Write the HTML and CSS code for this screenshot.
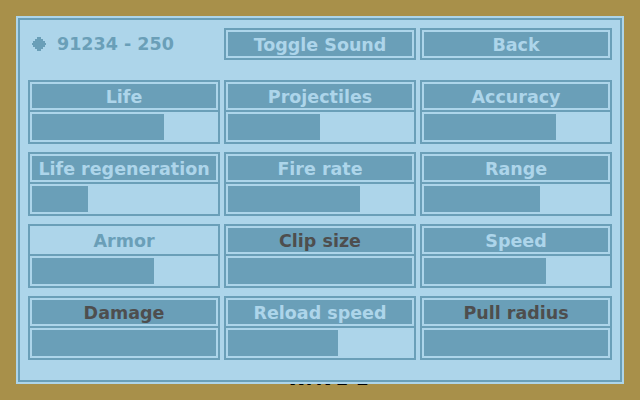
FILE: index.html
```html
<!DOCTYPE html>
<html lang="en">
<head>
<meta charset="utf-8">
<title>Upgrades</title>
<link rel="stylesheet" href="styles.css">
</head>
<body>
<div class="stage">
  <div class="wave">WAVE 2</div>
  <main class="panel">
    <div class="frame">
      <div class="topbar">
        <div class="score">
          <svg class="gem" width="14" height="14" viewBox="0 0 14 14" aria-hidden="true">
            <path d="M5 0H9V2H11V4H13V6H14V8H13V10H11V12H9V14H5V12H3V10H1V8H0V6H1V4H3V2H5Z"/>
          </svg>
          <span>91234 - 250</span>
        </div>
        <button class="btn">Toggle Sound</button>
        <button class="btn">Back</button>
      </div>

      <div class="stats">
        <div class="stat">
          <div class="stat-head">Life</div>
          <div class="stat-bar"><div class="track"><div class="fill" style="width:132px"></div></div></div>
        </div>
        <div class="stat">
          <div class="stat-head">Projectiles</div>
          <div class="stat-bar"><div class="track"><div class="fill" style="width:92px"></div></div></div>
        </div>
        <div class="stat">
          <div class="stat-head">Accuracy</div>
          <div class="stat-bar"><div class="track"><div class="fill" style="width:132px"></div></div></div>
        </div>

        <div class="stat">
          <div class="stat-head">Life regeneration</div>
          <div class="stat-bar"><div class="track"><div class="fill" style="width:56px"></div></div></div>
        </div>
        <div class="stat">
          <div class="stat-head">Fire rate</div>
          <div class="stat-bar"><div class="track"><div class="fill" style="width:132px"></div></div></div>
        </div>
        <div class="stat">
          <div class="stat-head">Range</div>
          <div class="stat-bar"><div class="track"><div class="fill" style="width:116px"></div></div></div>
        </div>

        <div class="stat">
          <div class="stat-head is-locked">Armor</div>
          <div class="stat-bar"><div class="track"><div class="fill" style="width:122px"></div></div></div>
        </div>
        <div class="stat">
          <div class="stat-head is-maxed">Clip size</div>
          <div class="stat-bar"><div class="track"><div class="fill" style="width:184px"></div></div></div>
        </div>
        <div class="stat">
          <div class="stat-head">Speed</div>
          <div class="stat-bar"><div class="track"><div class="fill" style="width:122px"></div></div></div>
        </div>

        <div class="stat">
          <div class="stat-head is-maxed">Damage</div>
          <div class="stat-bar"><div class="track"><div class="fill" style="width:184px"></div></div></div>
        </div>
        <div class="stat">
          <div class="stat-head">Reload speed</div>
          <div class="stat-bar"><div class="track"><div class="fill" style="width:110px"></div></div></div>
        </div>
        <div class="stat">
          <div class="stat-head is-maxed">Pull radius</div>
          <div class="stat-bar"><div class="track"><div class="fill" style="width:184px"></div></div></div>
        </div>
      </div>
    </div>
  </main>
</div>
</body>
</html>
```

FILE: styles.css
```css
:root {
  --sand: #a8904a;
  --ice: #add5ea;
  --steel: #6a9fb8;
  --ink: #4e4e4e;
}

* { box-sizing: border-box; }

html, body {
  margin: 0;
  width: 640px;
  height: 400px;
  overflow: hidden;
  background: var(--sand);
  font-family: "DejaVu Sans", "Liberation Sans", sans-serif;
  font-weight: bold;
}

.stage {
  position: relative;
  width: 640px;
  height: 400px;
  padding: 16px;
}

/* wave label sitting underneath the menu panel */
.wave {
  position: absolute;
  left: 287px;
  top: 370px;
  font-size: 18px;
  line-height: 18px;
  color: #000;
  letter-spacing: 1px;
}

.panel {
  position: relative;
  z-index: 1;
  width: 608px;
  height: 368px;
  padding: 2px;
  background: var(--ice);
}

.frame {
  height: 100%;
  border: 2px solid var(--steel);
  padding: 8px;
}

.topbar,
.stats {
  display: grid;
  grid-template-columns: repeat(3, 192px);
  column-gap: 4px;
}

.topbar { height: 32px; }

.stats {
  margin-top: 20px;
  row-gap: 8px;
}

.score {
  display: flex;
  align-items: center;
  gap: 11px;
  padding-left: 4px;
  color: var(--steel);
  font-size: 17.5px;
}

.gem { fill: var(--steel); display: block; }

.btn,
.stat-head {
  height: 32px;
  border: 2px solid var(--steel);
  background: var(--steel);
  box-shadow: inset 0 0 0 2px var(--ice);
  color: var(--ice);
  font: inherit;
  font-size: 17.5px;
  line-height: 28px;
  text-align: center;
  padding: 1px 0 0;
  white-space: nowrap;
}

.stat-head.is-locked {
  background: var(--ice);
  color: var(--steel);
}

.stat-head.is-maxed { color: var(--ink); }

.stat-bar {
  height: 32px;
  border: 2px solid var(--steel);
  border-top: 0;
  padding: 2px;
  background: var(--ice);
}

.track { height: 26px; }

.fill {
  height: 100%;
  background: var(--steel);
}
```
